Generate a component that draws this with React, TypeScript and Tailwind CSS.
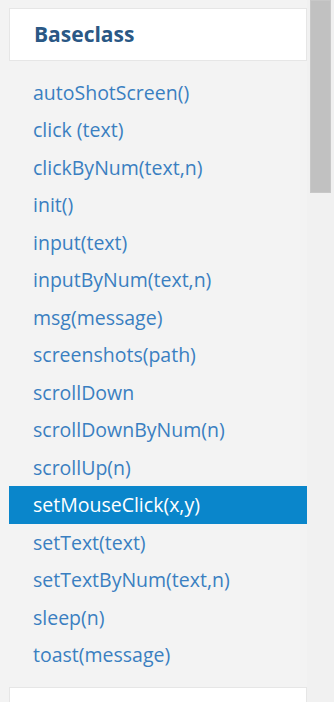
import React from "react";

const items = [
  "autoShotScreen()",
  "click (text)",
  "clickByNum(text,n)",
  "init()",
  "input(text)",
  "inputByNum(text,n)",
  "msg(message)",
  "screenshots(path)",
  "scrollDown",
  "scrollDownByNum(n)",
  "scrollUp(n)",
  "setMouseClick(x,y)",
  "setText(text)",
  "setTextByNum(text,n)",
  "sleep(n)",
  "toast(message)",
];

export default function App() {
  return (
    <div className="w-[334px] h-[702px] overflow-hidden bg-[#f3f3f3] flex" style={{ fontFamily: "'Open Sans', Lato, sans-serif" }}>
      <div className="w-[307px] shrink-0 pl-[9px] pt-[8px] flex flex-col">
        <div className="h-[53px] shrink-0 bg-white border border-[#e6e6e6] flex items-center pl-[24px]">
          <span className="text-[21px] font-bold text-[#2a5885] leading-none">Baseclass</span>
        </div>
        <ul className="mt-[12.5px] shrink-0 flex flex-col">
          {items.map((it) => {
            const active = it === "setMouseClick(x,y)";
            return (
              <li
                key={it}
                className={
                  "h-[37.5px] shrink-0 flex items-center pl-[24px] text-[19.5px] leading-none " +
                  (active ? "bg-[#0a86cb] text-white" : "text-[#3a7fc1]")
                }
              >
                {it}
              </li>
            );
          })}
        </ul>
        <div className="mt-[13px] h-[40px] shrink-0 bg-white border border-[#e6e6e6]" />
      </div>
      <div className="w-[27px] h-full bg-[#f1f1f1] pl-[3px] pr-[3px]">
        <div className="h-[193px] bg-[#c1c1c1] border border-[#c8c8c8]" />
      </div>
    </div>
  );
}
